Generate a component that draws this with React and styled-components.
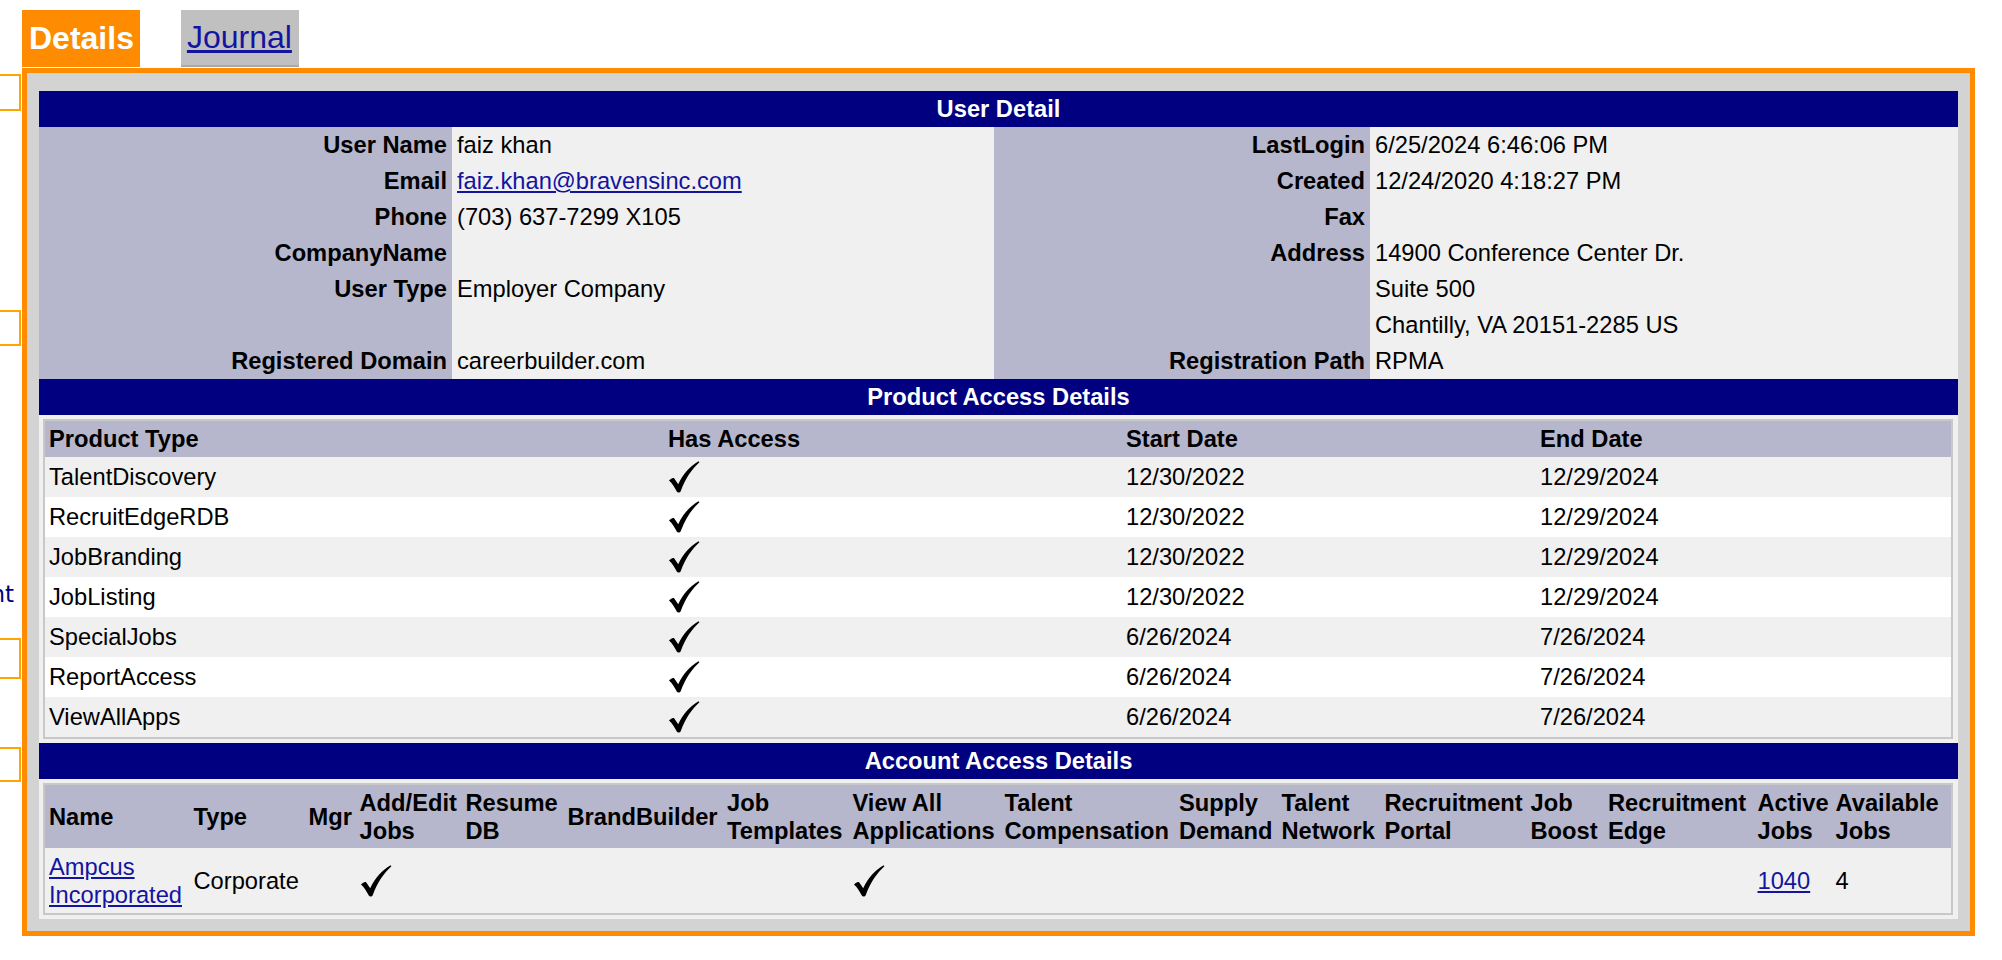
import styled, { createGlobalStyle } from "styled-components";

const GlobalStyle = createGlobalStyle`
  html, body {
    margin: 0;
    padding: 0;
    background: #fff;
  }
  body {
    font-family: "Liberation Sans", Arial, sans-serif;
    font-size: 23.7px;
    color: #000;
  }
  * { box-sizing: border-box; }
`;

const NAVY = "#000080";
const LAVENDER = "#b6b7cc";
const LIGHT = "#f0f0f0";
const LINK = "#1414a0";

const Page = styled.div`
  display: flex;
  align-items: flex-start;
  width: 2002px;
`;

/* left nav peeking out behind the panel */
const Sidebar = styled.aside`
  flex: none;
  width: 22px;
  overflow: hidden;
  display: flex;
  flex-direction: column;
  align-items: flex-end;
`;

const SideBox = styled.div`
  flex: none;
  width: 40px;
  height: ${({ $h }) => $h}px;
  margin-top: ${({ $top }) => $top}px;
  margin-right: 1px;
  border: 2px solid #ffa500;
`;

const SideText = styled.div`
  flex: none;
  width: max-content;
  margin-top: ${({ $top }) => $top}px;
  margin-right: 8px;
  white-space: nowrap;
  font-family: "DejaVu Sans", Verdana, sans-serif;
  font-size: 23px;
  line-height: 28px;
  color: ${NAVY};
`;

const Main = styled.main`
  flex: none;
  width: 1953px;
  padding-top: 10px;
`;

const Tabs = styled.div`
  display: flex;
  gap: 41px;
  margin-bottom: 1px;
`;

const Tab = styled.div`
  height: 57px;
  display: flex;
  align-items: center;
  padding: 0 ${({ $active }) => ($active ? "6px 0 7px" : "7px 0 6px")};
  font-size: 32px;
  font-weight: ${({ $active }) => ($active ? 700 : 400)};
  background: ${({ $active }) => ($active ? "#ff8c00" : "#c0c0c0")};
  border-bottom: ${({ $active }) => ($active ? "none" : "2px solid #a9a9a9")};
  color: #fff;
`;

const TabLink = styled.a`
  color: ${LINK};
  text-decoration: underline;
  cursor: pointer;
`;

const Panel = styled.section`
  border: 5px solid #ff8c00;
  background: #d3d3d3;
  padding: 18px 12px 12px;
`;

const Content = styled.div`
  background: ${LIGHT};
`;

const SectionHeader = styled.div`
  height: 36px;
  line-height: 36px;
  background: ${NAVY};
  color: #fff;
  font-weight: 700;
  text-align: center;
`;

const DetailGrid = styled.div`
  display: grid;
  grid-template-columns: 413px 542px 376px 588px;
  grid-auto-rows: 36px;
`;

const DetailLabel = styled.div`
  background: ${LAVENDER};
  font-weight: 700;
  text-align: right;
  padding: 4px 5px 4px 4px;
  line-height: 28px;
  white-space: nowrap;
`;

const DetailValue = styled.div`
  background: ${LIGHT};
  padding: 4px 4px 4px 5px;
  line-height: 28px;
  white-space: nowrap;
`;

const Link = styled.a`
  color: ${LINK};
  text-decoration: underline;
  cursor: pointer;
`;

const TableWrap = styled.div`
  padding: 4px 5px 4px 4px;
`;

const Table = styled.div`
  border: 2px solid #c8c8c8;
  display: grid;
  grid-template-columns: ${({ $cols }) => $cols.map((w) => `${w}px`).join(" ")};
`;

const HeadCell = styled.div`
  display: flex;
  align-items: center;
  min-height: ${({ $h }) => $h || 36}px;
  padding: 0 4px;
  background: ${LAVENDER};
  font-weight: 700;
  line-height: 28px;
  white-space: nowrap;
`;

const Cell = styled.div`
  display: flex;
  align-items: center;
  min-height: ${({ $h }) => $h || 40}px;
  padding: 0 4px;
  background: ${({ $alt }) => ($alt ? "#fff" : LIGHT)};
  line-height: 28px;
  white-space: nowrap;
`;

const Check = () => (
  <svg width="32" height="32" viewBox="0 0 32 32" aria-label="yes">
    <path
      d="M1 19.5 C3 17.5 5 16.5 6.3 17.4 L10.2 23.2 C15 13 22 5 30.6 0.2 L31.4 1.2 C24 8 17.5 17 12.8 30 C12 31.9 9.6 32 8.8 30.6 C6.6 26.4 4.2 22.4 1 19.5 Z"
      fill="#000"
    />
  </svg>
);

const leftRows = [
  ["User Name", "faiz khan"],
  ["Email", <Link key="e">faiz.khan@bravensinc.com</Link>],
  ["Phone", "(703) 637-7299 X105"],
  ["CompanyName", ""],
  ["User Type", "Employer Company"],
  ["", ""],
  ["Registered Domain", "careerbuilder.com"],
];

const rightRows = [
  ["LastLogin", "6/25/2024 6:46:06 PM"],
  ["Created", "12/24/2020 4:18:27 PM"],
  ["Fax", ""],
  ["Address", "14900 Conference Center Dr."],
  ["", "Suite 500"],
  ["", "Chantilly, VA 20151-2285 US"],
  ["Registration Path", "RPMA"],
];

const products = [
  ["TalentDiscovery", "12/30/2022", "12/29/2024"],
  ["RecruitEdgeRDB", "12/30/2022", "12/29/2024"],
  ["JobBranding", "12/30/2022", "12/29/2024"],
  ["JobListing", "12/30/2022", "12/29/2024"],
  ["SpecialJobs", "6/26/2024", "7/26/2024"],
  ["ReportAccess", "6/26/2024", "7/26/2024"],
  ["ViewAllApps", "6/26/2024", "7/26/2024"],
];

const productCols = [619, 458, 414, 415];

const accountCols = [
  144.5, 115, 51, 106, 102, 159.5, 125.5, 152, 174.5, 102.5, 103, 146, 77.5,
  149.5, 78, 119.5,
];

const accountHeads = [
  ["Name"],
  ["Type"],
  ["Mgr"],
  ["Add/Edit", "Jobs"],
  ["Resume", "DB"],
  ["BrandBuilder"],
  ["Job", "Templates"],
  ["View All", "Applications"],
  ["Talent", "Compensation"],
  ["Supply", "Demand"],
  ["Talent", "Network"],
  ["Recruitment", "Portal"],
  ["Job", "Boost"],
  ["Recruitment", "Edge"],
  ["Active", "Jobs"],
  ["Available", "Jobs"],
];

const accountRow = [
  <Link key="n">
    Ampcus
    <br />
    Incorporated
  </Link>,
  "Corporate",
  "",
  <Check key="c1" />,
  "",
  "",
  "",
  <Check key="c2" />,
  "",
  "",
  "",
  "",
  "",
  "",
  <Link key="a">1040</Link>,
  "4",
];

export default function App() {
  return (
    <Page>
      <GlobalStyle />
      <Sidebar>
        <SideBox $top={74} $h={37} />
        <SideBox $top={199} $h={36} />
        <SideText $top={234}>Account Management</SideText>
        <SideBox $top={30} $h={41} />
        <SideBox $top={68} $h={35} />
      </Sidebar>

      <Main>
        <Tabs>
          <Tab $active>Details</Tab>
          <Tab>
            <TabLink>Journal</TabLink>
          </Tab>
        </Tabs>

        <Panel>
          <Content>
            <SectionHeader>User Detail</SectionHeader>
            <DetailGrid>
              {leftRows.map(([label, value], i) => [
                <DetailLabel key={`ll${i}`}>{label}</DetailLabel>,
                <DetailValue key={`lv${i}`}>{value}</DetailValue>,
                <DetailLabel key={`rl${i}`}>{rightRows[i][0]}</DetailLabel>,
                <DetailValue key={`rv${i}`}>{rightRows[i][1]}</DetailValue>,
              ])}
            </DetailGrid>

            <SectionHeader>Product Access Details</SectionHeader>
            <TableWrap>
              <Table $cols={productCols}>
                <HeadCell>Product Type</HeadCell>
                <HeadCell>Has Access</HeadCell>
                <HeadCell>Start Date</HeadCell>
                <HeadCell>End Date</HeadCell>
                {products.map(([name, start, end], i) => [
                  <Cell key={`p${i}`} $alt={i % 2 === 1}>{name}</Cell>,
                  <Cell key={`a${i}`} $alt={i % 2 === 1}><Check /></Cell>,
                  <Cell key={`s${i}`} $alt={i % 2 === 1}>{start}</Cell>,
                  <Cell key={`e${i}`} $alt={i % 2 === 1}>{end}</Cell>,
                ])}
              </Table>
            </TableWrap>

            <SectionHeader>Account Access Details</SectionHeader>
            <TableWrap>
              <Table $cols={accountCols}>
                {accountHeads.map((lines, i) => (
                  <HeadCell key={`h${i}`} $h={63}>
                    <span>
                      {lines.map((l, j) => (
                        <span key={j}>
                          {j > 0 && <br />}
                          {l}
                        </span>
                      ))}
                    </span>
                  </HeadCell>
                ))}
                {accountRow.map((v, i) => (
                  <Cell key={`d${i}`} $h={65}>{v}</Cell>
                ))}
              </Table>
            </TableWrap>
          </Content>
        </Panel>
      </Main>
    </Page>
  );
}
